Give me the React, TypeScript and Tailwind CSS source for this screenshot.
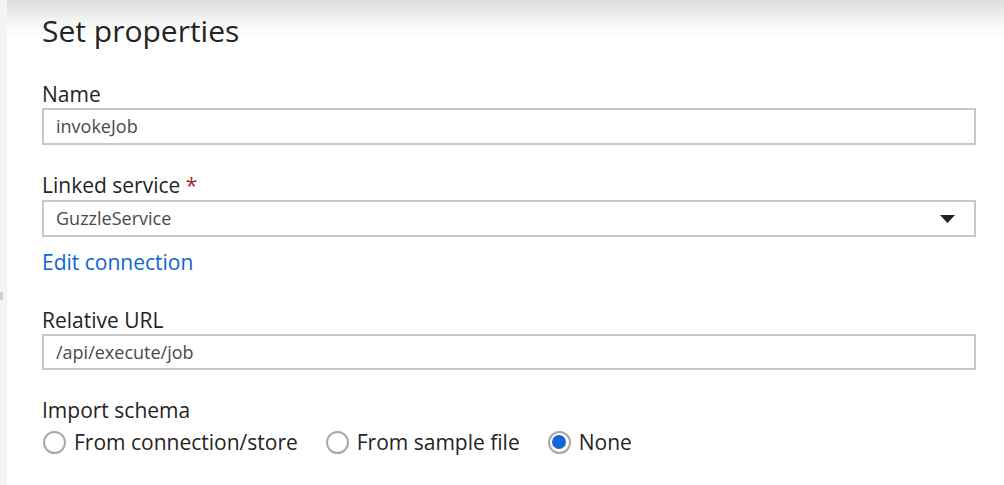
import React from "react";

const font = { fontFamily: '"Open Sans", "Noto Sans", sans-serif' };

function Label({ children }: { children: React.ReactNode }) {
  return <div className="text-[21px] leading-[28px] text-[#252423]">{children}</div>;
}

function Radio({ label, checked }: { label: string; checked?: boolean }) {
  return (
    <div className="flex items-center gap-[8px]">
      <div className="w-[23px] h-[23px] rounded-full border-2 border-[#a8a8a8] flex items-center justify-center bg-white">
        {checked && <div className="w-[14px] h-[14px] rounded-full bg-[#1565d8]" />}
      </div>
      <span className="text-[21px] leading-[28px] text-[#252423]">{label}</span>
    </div>
  );
}

export default function App() {
  return (
    <div
      className="w-[1004px] h-[485px] flex bg-[linear-gradient(to_bottom,#dcdcdc_0px,#f6f6f6_22px,#ffffff_38px)] overflow-hidden"
      style={font}
    >
      <div className="w-[7px] shrink-0 bg-[#f4f4f4] flex flex-col">
        <div className="h-[292px]" />
        <div className="h-[8px] w-[3px] bg-[#d0d0d0]" />
      </div>
      <div className="flex-1 pl-[35px] pr-[28px] flex flex-col">
        <h1 className="mt-[11px] text-[30px] leading-[40px] text-[#252423] font-normal">Set properties</h1>

        <div className="mt-[29px]">
          <Label>Name</Label>
          <div className="h-[37px] border-2 border-[#c8c8c8] bg-white flex items-center pl-[12px]">
            <span className="text-[18px] text-[#4a4a4a]">invokeJob</span>
          </div>
        </div>

        <div className="mt-[26px]">
          <Label>
            Linked service <span className="text-[#a4262c]">*</span>
          </Label>
          <div className="mt-[1px] h-[37px] border-2 border-[#c8c8c8] bg-white flex items-center pl-[12px] pr-[19px]">
            <span className="flex-1 text-[18px] text-[#4a4a4a]">GuzzleService</span>
            <svg width="15" height="8" viewBox="0 0 15 8">
              <path d="M0 0 L15 0 L7.5 8 Z" fill="#222" />
            </svg>
          </div>
        </div>

        <div className="mt-[11px] text-[21px] leading-[28px] text-[#0d66d6]">Edit connection</div>

        <div className="mt-[30px]">
          <Label>Relative URL</Label>
          <div className="h-[36px] border-2 border-[#c8c8c8] bg-white flex items-center pl-[12px]">
            <span className="text-[18px] text-[#4a4a4a]">/api/execute/job</span>
          </div>
        </div>

        <div className="mt-[26px]">
          <Label>Import schema</Label>
          <div className="mt-[4px] flex items-center gap-[28px] pl-[1px]">
            <Radio label="From connection/store" />
            <Radio label="From sample file" />
            <Radio label="None" checked />
          </div>
        </div>
      </div>
    </div>
  );
}
